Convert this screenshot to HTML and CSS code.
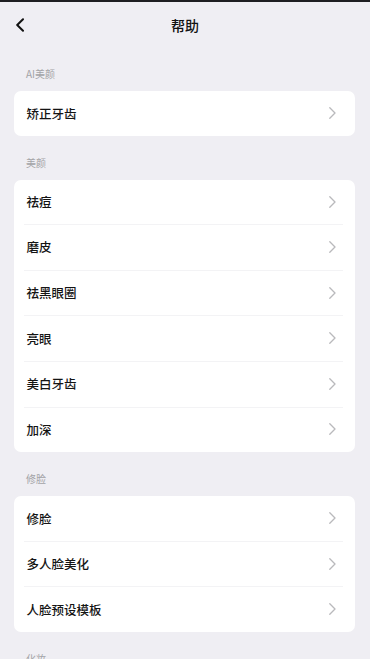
FILE: index.html
```html
<!DOCTYPE html>
<html lang="zh-CN">
<head>
<meta charset="utf-8">
<meta name="viewport" content="width=device-width, initial-scale=1">
<title>帮助</title>
<link rel="stylesheet" href="styles.css">
</head>
<body>
<div class="topline"></div>
<header class="header">
  <button class="back" aria-label="返回">
    <svg width="10" height="14" viewBox="0 0 10 14"><path d="M8 1.2 L2.2 7 L8 12.8" fill="none" stroke="#111" stroke-width="2" stroke-linecap="round" stroke-linejoin="round"/></svg>
  </button>
  <h1 class="title">帮助</h1>
</header>
<main class="content">
  <section class="group">
    <div class="label">AI美颜</div>
    <div class="card">
      <div class="row"><span>矫正牙齿</span><i class="chev"></i></div>
    </div>
  </section>
  <section class="group">
    <div class="label">美颜</div>
    <div class="card">
      <div class="row"><span>祛痘</span><i class="chev"></i></div>
      <div class="row"><span>磨皮</span><i class="chev"></i></div>
      <div class="row"><span>祛黑眼圈</span><i class="chev"></i></div>
      <div class="row"><span>亮眼</span><i class="chev"></i></div>
      <div class="row"><span>美白牙齿</span><i class="chev"></i></div>
      <div class="row"><span>加深</span><i class="chev"></i></div>
    </div>
  </section>
  <section class="group">
    <div class="label">修脸</div>
    <div class="card">
      <div class="row"><span>修脸</span><i class="chev"></i></div>
      <div class="row"><span>多人脸美化</span><i class="chev"></i></div>
      <div class="row"><span>人脸预设模板</span><i class="chev"></i></div>
    </div>
  </section>
  <section class="group">
    <div class="label">化妆</div>
  </section>
</main>
</body>
</html>
```
FILE: styles.css
```css
* { box-sizing: border-box; }
html, body {
  margin: 0;
  padding: 0;
  background: #efeef3;
  font-family: "Noto Sans CJK SC", "Noto Sans", sans-serif;
  color: #111;
}
body { width: 370px; height: 659px; overflow: hidden; }
.topline { height: 2px; background: #1e1e22; }
.header {
  position: relative;
  height: 46px;
  display: flex;
  align-items: center;
  justify-content: center;
}
.back {
  position: absolute;
  left: 13px;
  top: 15px;
  width: 14px;
  height: 16px;
  padding: 0;
  border: 0;
  background: none;
  display: flex;
  align-items: center;
  justify-content: center;
}
.title {
  margin: 0;
  font-size: 14px;
  font-weight: 500;
  line-height: 20px;
}
.content { padding: 0 15px 0 14px; }
.group { display: flex; flex-direction: column; }
.label {
  font-size: 10px;
  line-height: 14px;
  color: #a3a3a6;
  padding: 19px 0 10px 12px;
}
.group + .group .label { padding-top: 20px; }
.card {
  background: #fff;
  border-radius: 7px;
  overflow: hidden;
}
.row {
  position: relative;
  height: 44.6px;
  display: flex;
  align-items: center;
  justify-content: space-between;
  padding: 0 19px 0 12.5px;
  font-size: 12.5px;
  font-weight: 500;
  color: #141414;
}
.row + .row { height: 45.6px; border-top: 1px solid #f3f3f5; }
.row + .row { border-top: 0; }
.row + .row::before {
  content: "";
  position: absolute;
  top: 0;
  left: 10px;
  right: 12px;
  height: 1px;
  background: #f3f3f5;
}
.chev {
  width: 7px;
  height: 12px;
  background: no-repeat center / 7px 12px url("data:image/svg+xml;utf8,<svg xmlns='http://www.w3.org/2000/svg' width='7' height='12' viewBox='0 0 7 12'><path d='M0.8 0.8 L6 6 L0.8 11.2' fill='none' stroke='%23b9b9bc' stroke-width='1.3' stroke-linecap='round' stroke-linejoin='round'/></svg>");
}
```
